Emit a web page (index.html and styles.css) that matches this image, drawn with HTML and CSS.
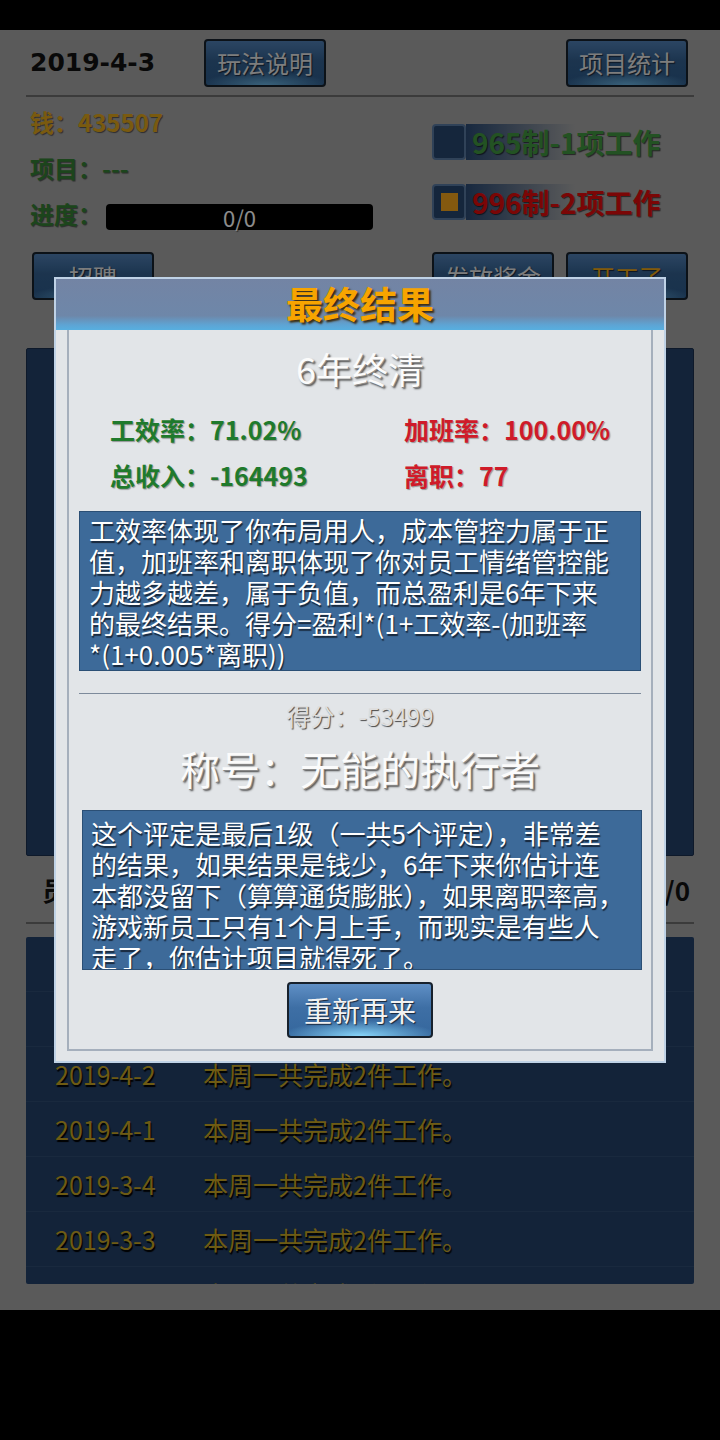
FILE: index.html
```html
<!DOCTYPE html>
<html lang="zh-CN">

<head>
    <meta charset="UTF-8">
    <title>996模拟器</title>
    <link rel="stylesheet" href="styles.css">
</head>

<body>
    <div id="screen">
        <div class="status-bar"></div>

        <!-- Main game board -->
        <div id="game">
            <div class="top-row">
                <div class="date">2019-4-3</div>
                <button class="btn btn-top">玩法说明</button>
                <button class="btn btn-top btn-right">项目统计</button>
            </div>

            <div class="info">
                <div class="info-left">
                    <p class="money">钱：435507</p>
                    <p class="project">项目：---</p>
                    <p class="project">进度：<span class="progress-bar">0/0</span></p>
                </div>
                <div class="info-right">
                    <div class="mode mode-965"><span class="check"></span><span class="mode-text">965制-1项工作</span></div>
                    <div class="mode mode-996"><span class="check checked"></span><span class="mode-text">996制-2项工作</span></div>
                </div>
            </div>

            <div class="action-row">
                <button class="btn btn-action">招聘</button>
                <button class="btn btn-action btn-bonus">发放奖金</button>
                <button class="btn btn-action btn-start">开工了</button>
            </div>

            <div class="project-panel"></div>

            <div class="staff-row">
                <span>员工列表</span>
                <span>0/0</span>
            </div>

            <ul class="log-list">
                <li><span class="log-date">2019-4-3</span><span>本周一共完成2件工作。</span></li>
                <li><span class="log-date">2019-4-3</span><span>游戏结束。</span></li>
                <li><span class="log-date">2019-4-2</span><span>本周一共完成2件工作。</span></li>
                <li><span class="log-date">2019-4-1</span><span>本周一共完成2件工作。</span></li>
                <li><span class="log-date">2019-3-4</span><span>本周一共完成2件工作。</span></li>
                <li><span class="log-date">2019-3-3</span><span>本周一共完成2件工作。</span></li>
                <li><span class="log-date">2019-3-2</span><span>本周一共完成2件工作。</span></li>
            </ul>
        </div>

        <div class="nav-bar"></div>

        <!-- Dim layer + final result dialog -->
        <div class="mask"></div>
        <div class="result-dialog">
            <div class="dialog-header">最终结果</div>
            <div class="dialog-body">
                <div class="dialog-inner">
                    <div class="result-title">6年终清</div>
                    <div class="stats">
                        <span class="good">工效率：71.02%</span>
                        <span class="bad">加班率：100.00%</span>
                        <span class="good">总收入：-164493</span>
                        <span class="bad">离职：77</span>
                    </div>
                    <div class="note note-formula">
                        工效率体现了你布局用人，成本管控力属于正<br>
                        值，加班率和离职体现了你对员工情绪管控能<br>
                        力越多越差，属于负值，而总盈利是6年下来<br>
                        的最终结果。得分=盈利*(1+工效率-(加班率<br>
                        *(1+0.005*离职))
                    </div>
                    <div class="divider"></div>
                    <div class="score">得分：-53499</div>
                    <div class="rank">称号：无能的执行者</div>
                    <div class="note note-rank">
                        这个评定是最后1级（一共5个评定），非常差<br>
                        的结果，如果结果是钱少，6年下来你估计连<br>
                        本都没留下（算算通货膨胀），如果离职率高，<br>
                        游戏新员工只有1个月上手，而现实是有些人<br>
                        走了，你估计项目就得死了。
                    </div>
                    <button class="btn btn-retry">重新再来</button>
                </div>
            </div>
        </div>
    </div>
</body>

</html>
```

FILE: styles.css
```css
/* Basic reset */
html,
body {
    margin: 0;
    padding: 0;
    background: #000;
    font-family: "Noto Sans CJK SC", "Noto Sans", sans-serif;
}

p {
    margin: 0;
}

#screen {
    position: relative;
    width: 720px;
    height: 1440px;
    overflow: hidden;
    background: #000;
}

.status-bar {
    height: 30px;
}

.nav-bar {
    height: 130px;
}

/* Game board */
#game {
    height: 1280px;
    box-sizing: border-box;
    padding: 0 26px;
    background: #a5a5a5;
}

/* Shared blue button */
.btn {
    box-sizing: border-box;
    border: 2px solid #17212c;
    border-radius: 4px;
    padding: 0;
    font-family: inherit;
    font-size: 24px;
    color: #f2f2f2;
    text-shadow: 1px 1px 1px #18263a;
    background:
        radial-gradient(ellipse 55% 30% at 50% 100%, rgba(140, 220, 255, 0.95) 0%, rgba(110, 190, 240, 0) 100%),
        linear-gradient(#5f8fc5, #3e6fa5 45%, #35679d);
}

.top-row {
    display: flex;
    align-items: center;
    height: 65px;
    padding: 0 6px 0 4px;
    border-bottom: 2px solid #6c6c6c;
}

.date {
    width: 174px;
    font-family: "DejaVu Sans", sans-serif;
    font-weight: bold;
    font-size: 25px;
    color: #111;
}

.btn-top {
    width: 122px;
    height: 48px;
}

.btn-top,
.btn-action {
    color: #e4e4e4;
    background:
        radial-gradient(ellipse 55% 30% at 50% 100%, rgba(120, 200, 245, 0.8) 0%, rgba(110, 190, 240, 0) 100%),
        linear-gradient(#507fb4, #33608f 45%, #2d5a8a);
}

.btn-right {
    margin-left: auto;
}

/* Money / project / progress + work mode */
.info {
    display: flex;
    height: 148px;
}

.info-left {
    flex: 0 0 402px;
    padding: 2px 0 0 4px;
    font-size: 24px;
    font-weight: bold;
    line-height: 46px;
    text-shadow: 1px 1px 1px rgba(0, 0, 0, 0.5);
}

.money {
    color: #dea41d;
}

.project {
    color: #347f34;
}

.progress-bar {
    display: inline-block;
    width: 267px;
    height: 26px;
    margin-left: 4px;
    vertical-align: middle;
    border-radius: 4px;
    background: #000;
    color: #fff;
    font-weight: normal;
    font-size: 22px;
    line-height: 26px;
    text-align: center;
}

.info-right {
    display: flex;
    flex-direction: column;
    gap: 24px;
    padding-top: 27px;
}

.mode {
    display: flex;
    align-items: center;
    height: 36px;
}

.check {
    display: flex;
    align-items: center;
    justify-content: center;
    box-sizing: border-box;
    width: 34px;
    height: 36px;
    border: 2px solid #5878a0;
    border-radius: 4px;
    background: #27456d;
}

.check.checked::after {
    content: "";
    width: 17px;
    height: 18px;
    background: #f0a21c;
}

.mode-text {
    height: 36px;
    padding: 0 6px;
    font-size: 28px;
    font-weight: bold;
    line-height: 36px;
    text-shadow: 1px 1px 1px rgba(0, 0, 0, 0.6);
    background: linear-gradient(90deg, #2b4a74 0, rgba(43, 74, 116, 0) 110px);
}

.mode-965 .mode-text {
    color: #409640;
}

.mode-996 .mode-text {
    color: #e00c0c;
}

.action-row {
    display: flex;
    gap: 12px;
    height: 48px;
    margin-top: 7px;
    padding: 0 6px;
}

.btn-action {
    width: 122px;
    height: 48px;
}

.btn-bonus {
    margin-left: auto;
}

.btn-action.btn-start {
    color: #eca412;
}

.project-panel {
    height: 508px;
    margin-top: 48px;
    box-sizing: border-box;
    border: 1px solid #1a2f4d;
    border-radius: 2px;
    background: #234069;
}

.staff-row {
    display: flex;
    justify-content: space-between;
    align-items: center;
    height: 66px;
    padding: 0 4px 0 16px;
    border-bottom: 2px solid #6c6c6c;
    font-size: 26px;
    font-weight: bold;
    color: #111;
}

/* Weekly log */
.log-list {
    height: 347px;
    margin: 13px 0 0;
    padding: 0;
    overflow: hidden;
    list-style: none;
    border-radius: 2px;
    background: #234069;
}

.log-list li {
    display: flex;
    height: 54px;
    padding-left: 29px;
    border-bottom: 1px solid #2f4c71;
    font-size: 25px;
    line-height: 54px;
    color: #c8a724;
    text-shadow: 1px 2px 1px #000;
}

.log-date {
    width: 148px;
}

/* Dim layer over the board */
.mask {
    position: absolute;
    inset: 0;
    background: rgba(0, 0, 0, 0.45);
}

/* Result dialog */
.result-dialog {
    position: absolute;
    left: 54px;
    top: 277px;
    width: 612px;
    height: 786px;
    box-sizing: border-box;
    display: flex;
    flex-direction: column;
    border: 2px solid #bfd2e6;
}

.dialog-header {
    height: 51px;
    font-size: 37px;
    font-weight: bold;
    line-height: 49px;
    text-align: center;
    color: #f7a400;
    text-shadow: 2px 2px 2px #3b2c12;
    background: linear-gradient(#7384a4 0%, #6e87a9 72%, #5ea4d4 90%, #57afe0 100%);
}

.dialog-body {
    flex: 1;
    display: flex;
    padding: 0 11px 10px;
    background: #e2e5e8;
}

.dialog-inner {
    flex: 1;
    display: flex;
    flex-direction: column;
    border: 2px solid #a5afbc;
    border-top: none;
}

.result-title {
    height: 76px;
    font-size: 36px;
    line-height: 76px;
    text-align: center;
    color: #fbfbfb;
    text-shadow: 1px 1px 0 #8a8a8a, 2px 2px 2px #444;
}

.stats {
    display: grid;
    grid-template-columns: 294px 1fr;
    padding-left: 41px;
    font-size: 25px;
    font-weight: bold;
    line-height: 46px;
    text-shadow: 1px 1px 1px rgba(0, 0, 0, 0.35);
}

.good {
    color: #1f7a2c;
}

.bad {
    color: #cf1b29;
}

.note {
    height: 160px;
    box-sizing: border-box;
    overflow: hidden;
    border: 1px solid #2b4f75;
    background: #3d6a99;
    font-size: 26px;
    line-height: 31px;
    white-space: nowrap;
    color: #fff;
    text-shadow: 1px 2px 1px #17273a;
}

.note-formula {
    margin: 13px 10px 0;
    padding: 2px 4px 0 9px;
}

.divider {
    height: 1px;
    margin: 22px 10px 0;
    background: #7d8a9b;
}

.score {
    margin-top: 2px;
    font-size: 24px;
    line-height: 40px;
    text-align: center;
    color: #dedede;
    text-shadow: 1px 1px 1px #4a4a4a;
}

.rank {
    font-size: 40px;
    line-height: 64px;
    text-align: center;
    color: #fbfbfb;
    text-shadow: 1px 1px 0 #8a8a8a, 2px 2px 2px #444;
}

.note-rank {
    margin: 10px 9px 0 13px;
    padding: 6px 4px 0 8px;
}

.btn-retry {
    width: 146px;
    height: 56px;
    margin: 12px auto 0;
    font-size: 28px;
}
```
